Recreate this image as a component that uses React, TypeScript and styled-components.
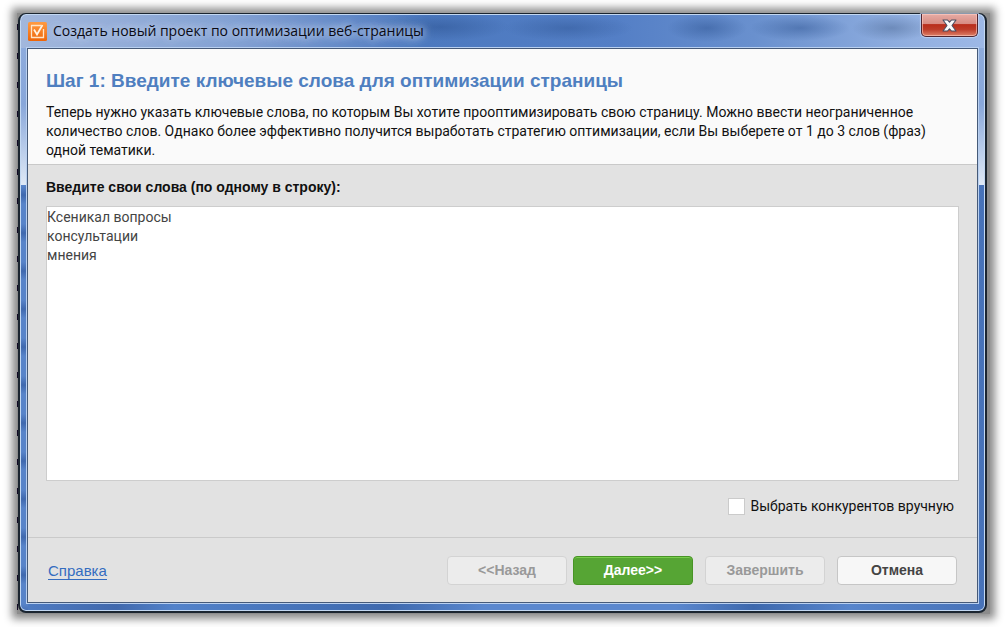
import React, { useState } from "react";
import styled, { createGlobalStyle, css } from "styled-components";

const GlobalStyle = createGlobalStyle`
  * { box-sizing: border-box; }
  body {
    margin: 0;
    background: #fff;
    font-family: Roboto, Arial, sans-serif;
    font-size: 14px;
    line-height: 19px;
    color: #111;
  }
`;

const Desktop = styled.div`
  display: flex;
  min-height: 100vh;
  padding: 13px 18px 13px 17px;
`;

const Backdrop = styled.div`
  flex: 1;
  display: flex;
  padding: 0 3px 1px 1px;
  background:
    repeating-linear-gradient(to bottom, transparent 0 11px, #120a24 11px 17px, transparent 17px 29px) 0 0 / 1px 100% no-repeat,
    #8c8c8c;
  box-shadow: 0 0 8px 5px #8c8c8c;
`;

const Window = styled.section`
  flex: 1;
  display: flex;
  flex-direction: column;
  padding: 0 7px 8px;
  border: 2px solid #1b2530;
  border-top-width: 1px;
  border-radius: 8px;
  box-shadow: inset 0 0 0 1px #c3d8f2;
  background:
    radial-gradient(ellipse 70px 14px at 420px 13px, rgba(40, 78, 140, 0.45), transparent) no-repeat,
    radial-gradient(ellipse 65px 13px at 548px 14px, rgba(40, 78, 140, 0.4), transparent) no-repeat,
    radial-gradient(ellipse 40px 14px at 687px 14px, rgba(40, 78, 140, 0.45), transparent) no-repeat,
    radial-gradient(ellipse 50px 13px at 780px 14px, rgba(40, 78, 140, 0.45), transparent) no-repeat,
    radial-gradient(ellipse 40px 13px at 872px 14px, rgba(50, 78, 120, 0.35), transparent) no-repeat,
    linear-gradient(to right, #a2b7dc, #83a1d3 22%, #4c79bf 42%, #547fc6 62%, #6990ce 76%, #91afe0 92%, #9db8e6) 0 0 / 100% 34px no-repeat,
    linear-gradient(to bottom, #8dabdc 34px, #88a7da 90px, #dfe9f6 171px, transparent 171px) 0 0 / 100% 172px no-repeat,
    repeating-linear-gradient(to bottom, #5884c9 0 20px, #4069ae 29px, #5884c9 38px) 0 0 / 8px 100% no-repeat,
    linear-gradient(to right, #4f7cc3, #4169ad 10%, #5282ca 16%, #3e69ae 38%, #5a87ce 48%, #5a87ce 68%, #3d68ad 76%, #5785cc 86%, #4772b8);
`;

const TitleBar = styled.header`
  display: flex;
  align-items: flex-start;
  gap: 6px;
  height: 34px;
  padding-left: 1px;
`;

const AppIcon = styled.svg`
  flex: none;
  width: 19px;
  height: 19px;
  margin-top: 8px;
`;

const Title = styled.h1`
  flex: 1;
  margin: 7px 0 0;
  font: 400 14px/20px "Open Sans", "Segoe UI", sans-serif;
  color: #0a0a14;
  text-shadow: 0 0 8px #b9cbe8, 0 0 8px #b9cbe8, 0 0 12px #b9cbe8;
`;

const CloseButton = styled.button`
  display: flex;
  justify-content: center;
  align-items: center;
  width: 57px;
  height: 23px;
  padding: 0;
  border: 1px solid #4e2530;
  border-top: 0;
  border-radius: 0 0 5px 5px;
  background: linear-gradient(to bottom, #e6aca5, #d78b82 45%, #b92d1b 48%, #bd3c29 70%, #dd8067);
  box-shadow: inset 0 0 0 1px rgba(255, 205, 195, 0.6), 0 0 1px 1px rgba(205, 222, 246, 0.7);
`;

const Client = styled.div`
  flex: 1;
  display: flex;
  flex-direction: column;
  border: 1px solid #465a78;
  background: #e2e2e2;
  box-shadow: 0 0 0 1px #b9d0f0;
`;

const Intro = styled.div`
  padding: 20px 18px 4px;
  border-bottom: 1px solid #c9c9c9;
  background: #fafafa;
`;

const StepTitle = styled.h2`
  margin: 0 0 10px;
  font: 700 19px/24px "Liberation Sans", Arial, sans-serif;
  color: #4f7fc0;
`;

const Description = styled.p`
  margin: 0;
`;

const Form = styled.form`
  flex: 1;
  display: flex;
  flex-direction: column;
`;

const Fields = styled.div`
  flex: 1;
  display: flex;
  flex-direction: column;
  padding: 13px 18px 21px;
`;

const FieldLabel = styled.label`
  margin-bottom: 9px;
  font: 700 14px/19px "Liberation Sans", Arial, sans-serif;
`;

const Keywords = styled.textarea`
  flex: 1;
  width: 100%;
  min-height: 120px;
  padding: 1px 0;
  border: 1px solid #cdcdcd;
  outline: 0;
  resize: none;
  background: #fff;
  font: inherit;
  color: #444;
`;

const CheckRow = styled.label`
  display: flex;
  align-items: center;
  align-self: flex-end;
  gap: 6px;
  margin: 16px 5px 0 0;
`;

const CheckBox = styled.input`
  appearance: none;
  width: 17px;
  height: 17px;
  margin: 0;
  border: 1px solid #cbcbcb;
  background: #fff;
  &:checked { box-shadow: inset 0 0 0 4px #fff; background: #56a534; }
`;

const Footer = styled.footer`
  display: flex;
  align-items: center;
  justify-content: space-between;
  padding: 18px 20px 17px;
  border-top: 1px solid #cacaca;
`;

const HelpLink = styled.a`
  font: 400 15px/17px "Liberation Sans", Arial, sans-serif;
  border-bottom: 1px solid #346cc0;
  color: #346cc0;
  text-decoration: none;
`;

const Actions = styled.div`
  display: flex;
  gap: 12px;
`;

const StepActions = styled.div`
  display: flex;
  gap: 6px;
`;

const ActionButton = styled.button<{ $primary?: boolean }>`
  width: 120px;
  height: 29px;
  padding: 0;
  border: 1px solid #c6c6c6;
  border-radius: 4px;
  background: #f7f7f7;
  font: 700 14px/19px "Liberation Sans", Arial, sans-serif;
  color: #444;
  &:disabled { border-color: #d3d3d3; background: #ececec; color: #999; }
  ${(p) => p.$primary && css`
    border-color: #489426;
    background: #56a534;
    box-shadow: inset 0 1px 0 #78cd4c;
    color: #fff;
  `}
`;

export default function App() {
  const [words, setWords] = useState("Ксеникал вопросы\nконсультации\nмнения");
  const [manual, setManual] = useState(false);

  return (
    <>
      <GlobalStyle />
      <Desktop>
        <Backdrop>
          <Window role="dialog" aria-labelledby="window-title">
            <TitleBar>
              <AppIcon viewBox="0 0 19 19" aria-hidden="true">
                <defs>
                  <linearGradient id="orange" x2="0" y2="1">
                    <stop stopColor="#ff9b42" />
                    <stop offset="1" stopColor="#ee6508" />
                  </linearGradient>
                </defs>
                <rect width="19" height="19" rx="1.5" fill="url(#orange)" />
                <path d="M13 3.5H3.500v12h12V7" fill="none" stroke="#ffe5c9" strokeWidth="1.3" />
                <path d="M6 7.500 9 12.500 14.500 3" fill="none" stroke="#fff3e4" strokeWidth="1.700" />
              </AppIcon>
              <Title id="window-title">Создать новый проект по оптимизации веб-страницы</Title>
              <CloseButton type="button" aria-label="Закрыть">
                <svg width="15" height="13" viewBox="0 0 15 13" aria-hidden="true">
                  <path
                    d="M1 1h4.500l2 2.200L9.500 1H14l-4 5.500 4 5.500H9.500l-2-2.200-2 2.200H1l4-5.500z"
                    fill="#fafafa"
                    stroke="#4b4f63"
                    strokeWidth="1.1"
                    strokeLinejoin="round"
                  />
                </svg>
              </CloseButton>
            </TitleBar>
            <Client>
              <Intro>
                <StepTitle>Шаг 1: Введите ключевые слова для оптимизации страницы</StepTitle>
                <Description>
                  Теперь нужно указать ключевые слова, по которым Вы хотите прооптимизировать свою страницу. Можно ввести
                  неограниченное количество слов. Однако более эффективно получится выработать стратегию оптимизации, если
                  Вы выберете от 1 до 3 слов (фраз) одной тематики.
                </Description>
              </Intro>
              <Form onSubmit={(e) => e.preventDefault()}>
                <Fields>
                  <FieldLabel htmlFor="keywords">Введите свои слова (по одному в строку):</FieldLabel>
                  <Keywords
                    id="keywords"
                    spellCheck={false}
                    value={words}
                    onChange={(e) => setWords(e.target.value)}
                  />
                  <CheckRow>
                    <CheckBox type="checkbox" checked={manual} onChange={(e) => setManual(e.target.checked)} />
                    Выбрать конкурентов вручную
                  </CheckRow>
                </Fields>
                <Footer>
                  <HelpLink href="#help">Справка</HelpLink>
                  <Actions>
                    <StepActions>
                      <ActionButton type="button" disabled>&lt;&lt;Назад</ActionButton>
                      <ActionButton type="submit" $primary>Далее&gt;&gt;</ActionButton>
                    </StepActions>
                    <ActionButton type="button" disabled>Завершить</ActionButton>
                    <ActionButton type="button">Отмена</ActionButton>
                  </Actions>
                </Footer>
              </Form>
            </Client>
          </Window>
        </Backdrop>
      </Desktop>
    </>
  );
}
